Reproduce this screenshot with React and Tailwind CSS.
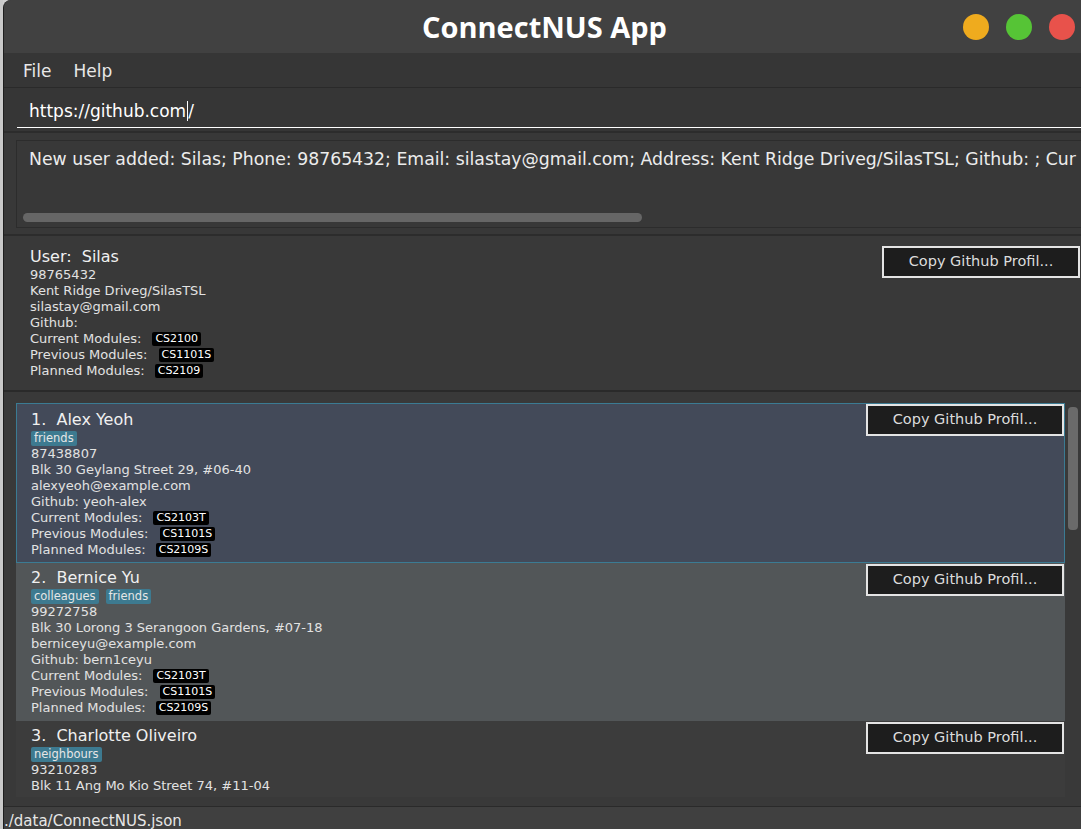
import React from 'react';

const persons = [
  {
    name: 'Alex Yeoh',
    tags: ['friends'],
    lines: ['87438807', 'Blk 30 Geylang Street 29, #06-40', 'alexyeoh@example.com', 'Github: yeoh-alex'],
    modules: ['CS2103T', 'CS1101S', 'CS2109S'],
  },
  {
    name: 'Bernice Yu',
    tags: ['colleagues', 'friends'],
    lines: ['99272758', 'Blk 30 Lorong 3 Serangoon Gardens, #07-18', 'berniceyu@example.com', 'Github: bern1ceyu'],
    modules: ['CS2103T', 'CS1101S', 'CS2109S'],
  },
  {
    // only the part that is scrolled into view
    name: 'Charlotte Oliveiro',
    tags: ['neighbours'],
    lines: ['93210283', 'Blk 11 Ang Mo Kio Street 74, #11-04'],
    modules: null,
  },
];

const cardStyles = [
  'bg-[#434a59] border border-[#3b7b93] pt-[6px] pb-[4px]',
  'bg-[#525658] pt-[5px] pb-[5px]',
  'bg-[#3c3c3c] pt-[5px] pb-[4px]',
];

function CopyButton() {
  return (
    <button className="h-[32px] w-[198px] shrink-0 border-2 border-[#e4e4e4] bg-[#1d1d1d] text-[14.5px] text-[#dcdcdc] flex items-center justify-center">
      Copy Github Profil...
    </button>
  );
}

function ModuleRow({ label, code, gap }) {
  return (
    <div className="flex items-center h-[16px]">
      <span>{label}</span>
      <span className={`${gap} h-[14px] px-[3px] rounded-[2px] bg-black text-white text-[11px] leading-[14px]`}>
        {code}
      </span>
    </div>
  );
}

function Details({ lines, modules }) {
  return (
    <div className="text-[13px] leading-[16px] text-[#e2e2e2]">
      {lines.map((l, i) => (
        <div key={i} className="h-[16px] whitespace-nowrap">{l}</div>
      ))}
      {modules && (
        <>
          <ModuleRow label="Current Modules:" code={modules[0]} gap="ml-[11px]" />
          <ModuleRow label="Previous Modules:" code={modules[1]} gap="ml-[11px]" />
          <ModuleRow label="Planned Modules:" code={modules[2]} gap="ml-[10px]" />
        </>
      )}
    </div>
  );
}

function PersonCard({ p, index }) {
  const first = index === 0;
  return (
    <div className={`shrink-0 ${cardStyles[index]}`}>
      <div className="flex justify-between">
        <div className={first ? 'pl-[14px]' : 'pl-[15px]'}>
          <div className="h-[20px] text-[16px] leading-[20px] text-[#f0f0f0] whitespace-pre">
            {`${index + 1}.  ${p.name}`}
          </div>
          <div className="flex gap-[7px] h-[16px] items-center">
            {p.tags.map((t) => (
              <span key={t} className="h-[15px] px-[3px] rounded-[2px] bg-[#3d7a90] text-[11.5px] leading-[15px] text-[#e6e6e6]">
                {t}
              </span>
            ))}
          </div>
          <Details lines={p.lines} modules={p.modules} />
        </div>
        <div className={first ? '-mt-[6px]' : '-mt-[4px] pr-[1px]'}>
          <CopyButton />
        </div>
      </div>
    </div>
  );
}

export default function App() {
  return (
    <div
      className="flex h-[829px] w-[1081px] overflow-hidden bg-[#cfcfcf]"
      style={{ fontFamily: '"DejaVu Sans", Verdana, sans-serif' }}
    >
      {/* desktop edge */}
      <div className="w-[3px] shrink-0 bg-[#c9c9c9]" />

      <div className="flex flex-1 min-w-0 flex-col rounded-tl-[8px] border-l border-[#1e1e1e] bg-[#383838] overflow-hidden">
        {/* Title bar */}
        <div className="grid h-[53px] shrink-0 grid-cols-[1fr_auto_1fr] items-center bg-[#414141]">
          <div />
          <div
            className="pl-[4px] text-[29px] font-bold text-white leading-none"
            style={{ fontFamily: '"Open Sans", sans-serif' }}
          >
            ConnectNUS App
          </div>
          <div className="flex justify-end gap-[17px] pr-[6px]">
            <span className="h-[26px] w-[26px] rounded-full bg-[#efab1e]" />
            <span className="h-[26px] w-[26px] rounded-full bg-[#56c436]" />
            <span className="h-[26px] w-[26px] rounded-full bg-[#e8524b]" />
          </div>
        </div>

        {/* Menu */}
        <div className="flex h-[35px] shrink-0 items-center gap-[22px] border-b border-[#2a2a2a] bg-[#363636] pl-[19px] pt-[3px] text-[17px] text-[#e8e8e8]">
          <span>File</span>
          <span>Help</span>
        </div>

        {/* Command box */}
        <div className="h-[45px] shrink-0 border-b-2 border-[#2c2c2c] bg-[#363636] pl-[13px] pt-[10px]">
          <div className="h-[30px] border-b border-white pl-[12px] text-[17px] leading-[26px] text-white">
            https://github.com<span className="border-l border-white ml-[1px]" />/
          </div>
        </div>

        {/* Result display */}
        <div className="h-[103px] shrink-0 border-b-2 border-[#2c2c2c] bg-[#383838] pl-[12px] pt-[7px]">
          <div className="flex h-[88px] flex-col border border-[#2c2c2c] border-r-0 pl-[12px] pt-[6px] overflow-hidden">
            <div className="whitespace-nowrap text-[17.3px] leading-[24px] text-[#ececec]">
              New user added: Silas; Phone: 98765432; Email: silastay@gmail.com; Address: Kent Ridge Driveg/SilasTSL; Github: ; Cur
            </div>
            <div className="mt-auto mb-[5px] -ml-[6px] h-[9px] w-[619px] rounded-full bg-[#666666]" />
          </div>
        </div>

        {/* User panel */}
        <div className="flex h-[156px] shrink-0 justify-between border-b-2 border-[#2a2a2a] bg-[#393939] pl-[26px] pt-[10px]">
          <div className="pt-[1px]">
            <div className="h-[20px] text-[16px] leading-[20px] text-[#f0f0f0] whitespace-pre">User:  Silas</div>
            <Details
              lines={['98765432', 'Kent Ridge Driveg/SilasTSL', 'silastay@gmail.com', 'Github:']}
              modules={['CS2100', 'CS1101S', 'CS2109']}
            />
          </div>
          <div className="pr-[1px]">
            <CopyButton />
          </div>
        </div>

        {/* Person list */}
        <div className="flex min-h-0 flex-1 bg-[#393939] pl-[12px] pt-[11px] pb-[9px]">
          <div className="flex min-w-0 flex-1 flex-col overflow-hidden">
            {persons.map((p, i) => (
              <PersonCard key={p.name} p={p} index={i} />
            ))}
          </div>
          <div className="w-[16px] shrink-0 pl-[3px] pr-[3px] pt-[4px]">
            <div className="h-[123px] w-[10px] rounded-[4px] bg-[#6a6a6a]" />
          </div>
        </div>

        {/* Status bar */}
        <div className="h-[23px] shrink-0 border-t border-[#2a2a2a] bg-[#404040] -ml-[1px] pl-[1px] pt-[5px] text-[15px] leading-[18px] text-[#e6e6e6] whitespace-nowrap overflow-hidden">
          ./data/ConnectNUS.json
        </div>
      </div>
    </div>
  );
}
